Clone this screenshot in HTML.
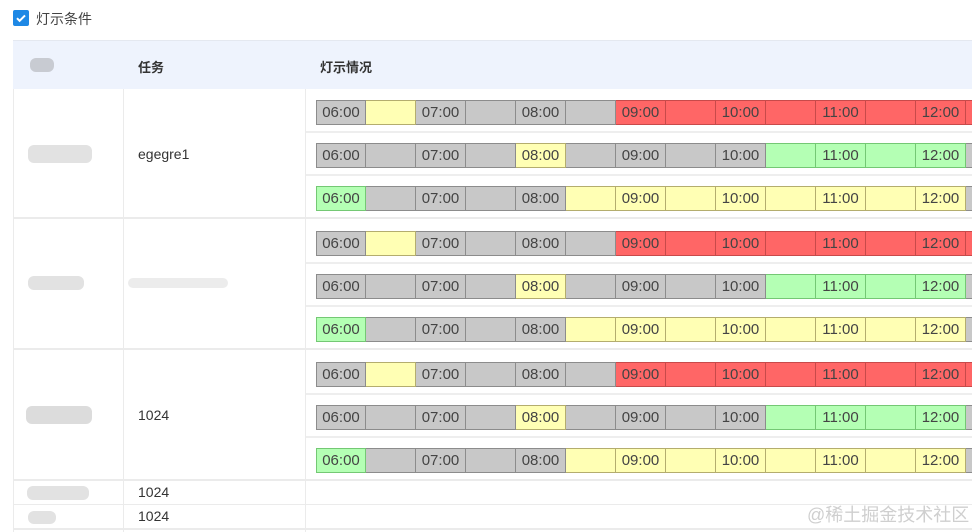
<!DOCTYPE html>
<html><head><meta charset="utf-8"><style>
*{box-sizing:border-box;margin:0;padding:0}
body{width:972px;height:532px;overflow:hidden;background:#fff;font-family:"Liberation Sans","Noto Sans CJK SC",sans-serif;position:relative;color:#333}
.a{position:absolute}
.hd{left:13px;top:40px;width:959px;height:49px;background:#eef3fd;border-top:1px solid #e4e8f0}
.ht{font-size:13px;font-weight:bold;color:#333;top:57px}
.hl{background:#ebebeb;height:2px;left:13px;width:959px}
.vl{background:#ebebeb;width:1px}
.sl{background:#eeeeee;height:2px;left:306px;width:666px}
.bar{left:316px;height:25px;display:flex;font-size:15px;color:#444}
.bar div{width:50px;height:25px;line-height:23px;text-align:center;border:1px solid;border-left:none;flex:none}
.bar div:first-child{border-left:1px solid}
.g{background:#c8c8c8;border-color:#8c8c8c!important}
.y{background:#ffffb4;border-color:#b4ad6e!important}
.r{background:#ff6666;border-color:#c84a4a!important}
.n{background:#b4ffb4;border-color:#74c874!important}
.t{font-size:14px;color:#333}
.blob{background:#e2e2e2;border-radius:6px}
</style></head><body>
<div class="a" style="left:13px;top:10px;width:16px;height:16px;background:#1e88e5;border-radius:2px"><svg width="16" height="16"><path d="M4 8.2l2.6 2.6L12 5.4" stroke="#fff" stroke-width="2" fill="none"/></svg></div>
<div class="a" style="left:36px;top:9px;font-size:14px;color:#444">灯示条件</div>
<div class="a hd"></div>
<div class="a blob" style="left:30px;top:58px;width:24px;height:14px;background:#c8cbd2"></div>
<div class="a ht" style="left:138px">任务</div>
<div class="a ht" style="left:320px">灯示情况</div>
<div class="a vl" style="left:13px;top:89px;height:443px"></div>
<div class="a vl" style="left:123px;top:89px;height:443px"></div>
<div class="a vl" style="left:305px;top:89px;height:443px"></div>
<div class="a hl" style="top:217px"></div>
<div class="a hl" style="top:348px"></div>
<div class="a hl" style="top:479px"></div>
<div class="a hl" style="top:504px;height:1px"></div>
<div class="a hl" style="top:528px"></div>
<div class="a sl" style="top:131px"></div><div class="a sl" style="top:174px"></div>
<div class="a sl" style="top:262px"></div><div class="a sl" style="top:305px"></div>
<div class="a sl" style="top:393px"></div><div class="a sl" style="top:436px"></div>
<div class="a blob" style="left:28px;top:145px;width:64px;height:18px"></div>
<div class="t a" style="left:138px;top:146px">egegre1</div>
<div class="a blob" style="left:28px;top:276px;width:56px;height:14px"></div>
<div class="a blob" style="left:128px;top:278px;width:100px;height:10px;background:#ececec"></div>
<div class="a blob" style="left:26px;top:406px;width:66px;height:18px;background:#dcdcdc"></div>
<div class="t a" style="left:138px;top:407px">1024</div>
<div class="a blob" style="left:27px;top:486px;width:62px;height:14px"></div>
<div class="t a" style="left:138px;top:484px">1024</div>
<div class="a blob" style="left:28px;top:511px;width:28px;height:13px"></div>
<div class="t a" style="left:138px;top:508px">1024</div>
<div class="a bar" style="top:100px"><div class="g">06:00</div><div class="y"></div><div class="g">07:00</div><div class="g"></div><div class="g">08:00</div><div class="g"></div><div class="r">09:00</div><div class="r"></div><div class="r">10:00</div><div class="r"></div><div class="r">11:00</div><div class="r"></div><div class="r">12:00</div><div class="r"></div></div>
<div class="a bar" style="top:143px"><div class="g">06:00</div><div class="g"></div><div class="g">07:00</div><div class="g"></div><div class="y">08:00</div><div class="g"></div><div class="g">09:00</div><div class="g"></div><div class="g">10:00</div><div class="n"></div><div class="n">11:00</div><div class="n"></div><div class="n">12:00</div><div class="g"></div></div>
<div class="a bar" style="top:186px"><div class="n">06:00</div><div class="g"></div><div class="g">07:00</div><div class="g"></div><div class="g">08:00</div><div class="y"></div><div class="y">09:00</div><div class="y"></div><div class="y">10:00</div><div class="y"></div><div class="y">11:00</div><div class="y"></div><div class="y">12:00</div><div class="g"></div></div>
<div class="a bar" style="top:231px"><div class="g">06:00</div><div class="y"></div><div class="g">07:00</div><div class="g"></div><div class="g">08:00</div><div class="g"></div><div class="r">09:00</div><div class="r"></div><div class="r">10:00</div><div class="r"></div><div class="r">11:00</div><div class="r"></div><div class="r">12:00</div><div class="r"></div></div>
<div class="a bar" style="top:274px"><div class="g">06:00</div><div class="g"></div><div class="g">07:00</div><div class="g"></div><div class="y">08:00</div><div class="g"></div><div class="g">09:00</div><div class="g"></div><div class="g">10:00</div><div class="n"></div><div class="n">11:00</div><div class="n"></div><div class="n">12:00</div><div class="g"></div></div>
<div class="a bar" style="top:317px"><div class="n">06:00</div><div class="g"></div><div class="g">07:00</div><div class="g"></div><div class="g">08:00</div><div class="y"></div><div class="y">09:00</div><div class="y"></div><div class="y">10:00</div><div class="y"></div><div class="y">11:00</div><div class="y"></div><div class="y">12:00</div><div class="g"></div></div>
<div class="a bar" style="top:362px"><div class="g">06:00</div><div class="y"></div><div class="g">07:00</div><div class="g"></div><div class="g">08:00</div><div class="g"></div><div class="r">09:00</div><div class="r"></div><div class="r">10:00</div><div class="r"></div><div class="r">11:00</div><div class="r"></div><div class="r">12:00</div><div class="r"></div></div>
<div class="a bar" style="top:405px"><div class="g">06:00</div><div class="g"></div><div class="g">07:00</div><div class="g"></div><div class="y">08:00</div><div class="g"></div><div class="g">09:00</div><div class="g"></div><div class="g">10:00</div><div class="n"></div><div class="n">11:00</div><div class="n"></div><div class="n">12:00</div><div class="g"></div></div>
<div class="a bar" style="top:448px"><div class="n">06:00</div><div class="g"></div><div class="g">07:00</div><div class="g"></div><div class="g">08:00</div><div class="y"></div><div class="y">09:00</div><div class="y"></div><div class="y">10:00</div><div class="y"></div><div class="y">11:00</div><div class="y"></div><div class="y">12:00</div><div class="g"></div></div>
<div class="a" style="left:807px;top:505px;font-size:18px;line-height:20px;white-space:nowrap;color:#cfcfcf">@稀土掘金技术社区</div>
</body></html>
